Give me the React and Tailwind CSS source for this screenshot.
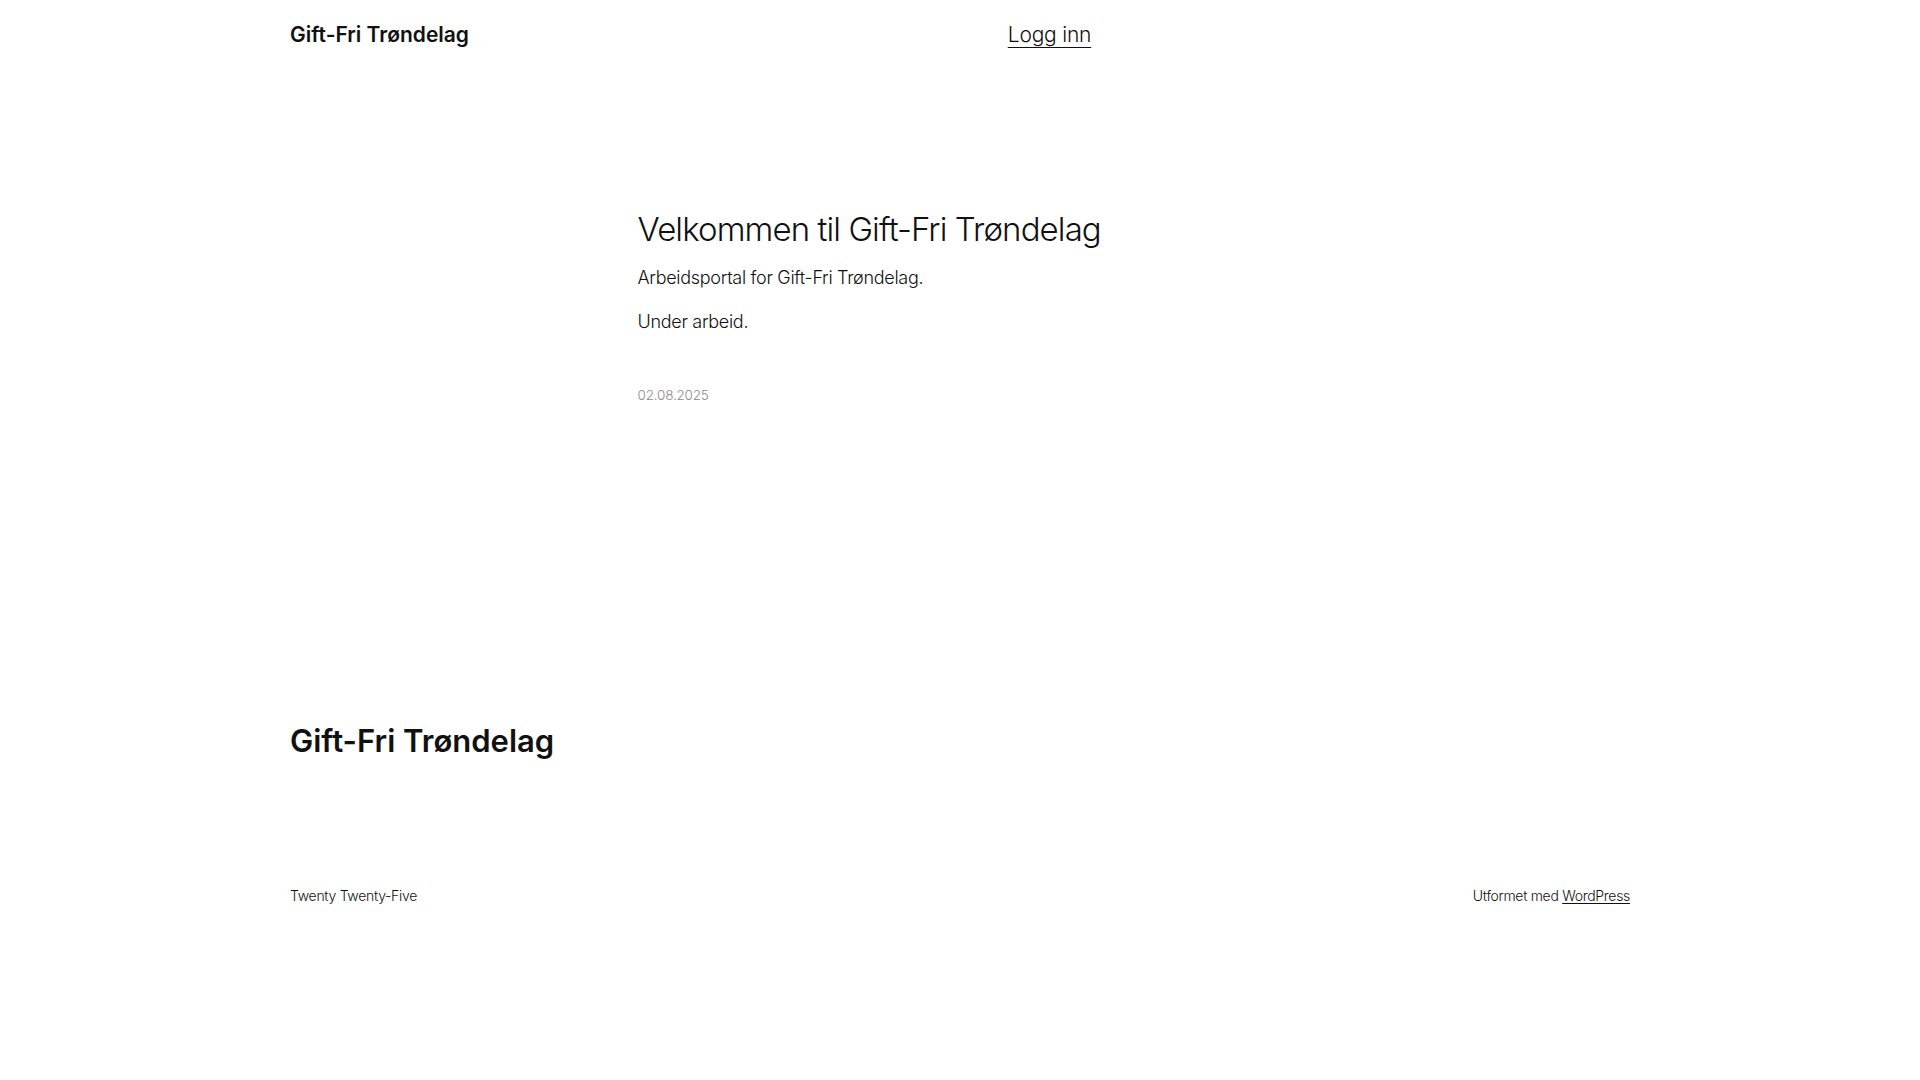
export default function App() {
  return (
    <div className="min-h-screen bg-white text-[#111111] font-['Inter',sans-serif]">
      {/* header: three items, the last one empty, spread with justify-between */}
      <header className="mx-auto w-[1340px] h-[70px] flex items-center justify-between">
        <a className="text-[21px] font-semibold tracking-[0px]">Gift-Fri Trøndelag</a>
        <nav>
          <a className="text-[21px] font-light underline underline-offset-[5px] decoration-1 tracking-[-0.2px]">Logg inn</a>
        </nav>
        <div className="w-0" />
      </header>

      <main className="mx-auto w-[645px] pt-[140px]">
        <h1 className="text-[33px] leading-[1.2] font-light tracking-[-0.9px]">Velkommen til Gift-Fri Trøndelag</h1>
        <p className="mt-[14px] text-[18px] leading-[1.6] font-light tracking-[-0.3px]">Arbeidsportal for Gift-Fri Trøndelag.</p>
        <p className="mt-[16px] text-[18px] leading-[1.6] font-light tracking-[-0.3px]">Under arbeid.</p>
        <div className="mt-[49px] text-[13.5px] leading-[1.4] font-light text-[#8a8a8a] tracking-[-0.2px]">02.08.2025</div>
      </main>

      <footer className="mx-auto w-[1340px] pt-[317px]">
        <div className="text-[31px] leading-[1.2] font-semibold tracking-[0px]">Gift-Fri Trøndelag</div>
        <div className="mt-[127px] flex justify-between text-[14px] leading-[20px] font-light tracking-[-0.3px]">
          <span>Twenty Twenty-Five</span>
          <span>
            Utformet med <a className="underline underline-offset-2 decoration-1">WordPress</a>
          </span>
        </div>
      </footer>
    </div>
  );
}
